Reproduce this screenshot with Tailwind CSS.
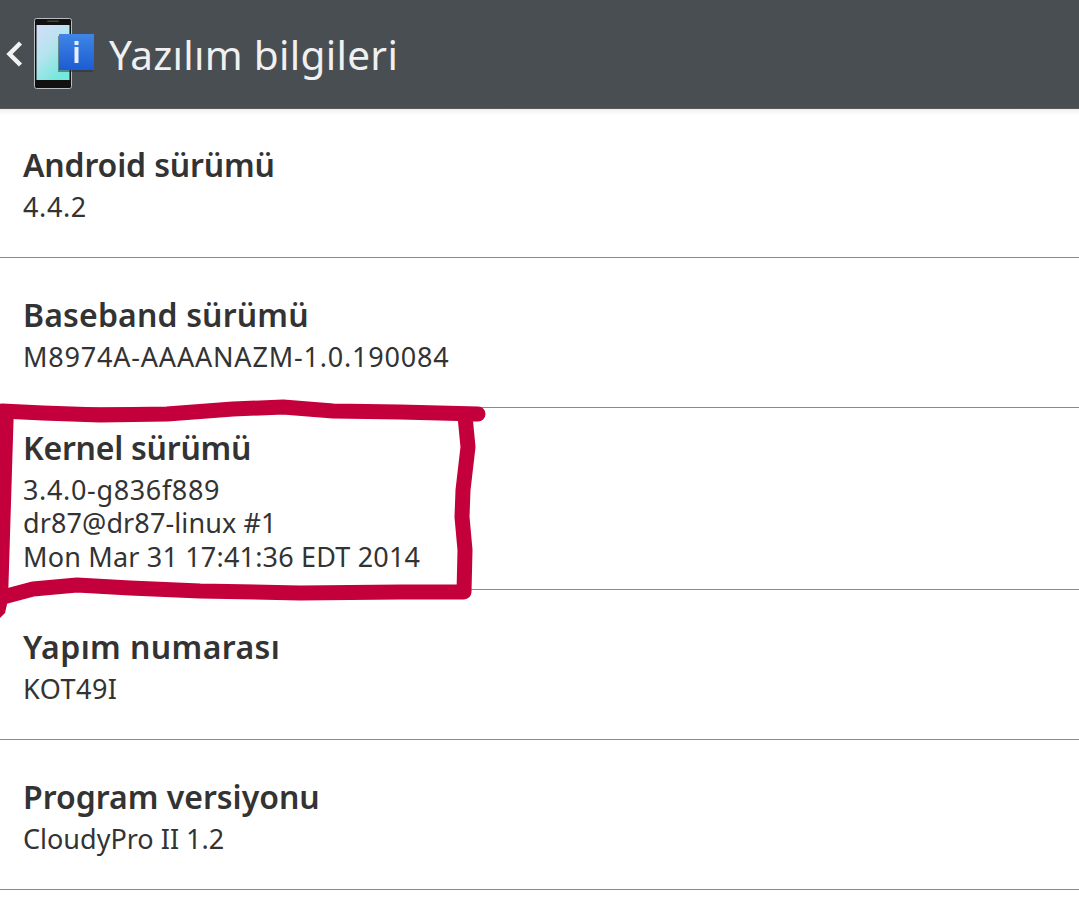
<!DOCTYPE html>
<html lang="tr">
<head>
<meta charset="UTF-8">
<title>Yazılım bilgileri</title>
<script src="https://cdn.jsdelivr.net/npm/@tailwindcss/browser@4"></script>
</head>
<body class="bg-white font-['Noto_Sans',sans-serif] overflow-hidden">
<div class="relative w-[1079px] h-[921px] overflow-hidden">
  <header class="h-[109px] bg-[#484e52] flex items-center border-b border-[#55595c]">
    <svg class="ml-[5px] w-[18px] h-[28px]" viewBox="0 0 18 28"><path d="M15.5 3 L4.5 14 L15.5 25" fill="none" stroke="#f2f2f2" stroke-width="4.5"/></svg>
    <svg class="ml-[11px] w-[62px] h-[72px] shrink-0" viewBox="0 0 62 72">
      <defs>
        <linearGradient id="screen" x1="0" y1="0" x2="0.6" y2="1"><stop offset="0" stop-color="#d5dcf8"/><stop offset="0.5" stop-color="#b5e4ee"/><stop offset="1" stop-color="#74e8dc"/></linearGradient>
        <linearGradient id="badge" x1="0" y1="0" x2="0" y2="1"><stop offset="0" stop-color="#3f86e6"/><stop offset="1" stop-color="#1c5cd2"/></linearGradient>
      </defs>
      <rect x="0.5" y="0.5" width="37" height="70" rx="2" fill="#111" stroke="#b8bcbe"/>
      <rect x="2.5" y="7" width="33" height="55" fill="url(#screen)"/>
      <rect x="13" y="2.5" width="12" height="1.5" rx="0.7" fill="#444"/>
      <rect x="24" y="18" width="35" height="36" fill="#2a2e31" opacity="0.5"/>
      <rect x="25" y="16" width="35" height="36" fill="url(#badge)"/>
      <rect x="40.5" y="23" width="4" height="4" fill="#e8eefc"/>
      <rect x="40.5" y="29" width="4" height="16" fill="#e8eefc"/>
    </svg>
    <h1 class="ml-[13px] pt-[2px] text-[40.5px] leading-none text-[#f0f0f0] tracking-[0.3px]">Yazılım bilgileri</h1>
  </header>
  <div class="h-[6px] bg-gradient-to-b from-[#efefef] to-white"></div>
  <main class="text-[#333333]">
    <section class="h-[143px] pl-[23px] pb-[4px] border-b border-[#8a8a8a] flex flex-col justify-center">
      <h2 class="text-[32px] font-semibold leading-[42px] tracking-[-0.15px]">Android sürümü</h2>
      <p class="text-[27px] leading-[34px] mt-[4px] tracking-[0.6px]">4.4.2</p>
    </section>
    <section class="h-[150px] pl-[23px] pt-[2px] border-b border-[#8a8a8a] flex flex-col justify-center">
      <h2 class="text-[32px] font-semibold leading-[42px] tracking-[0.15px]">Baseband sürümü</h2>
      <p class="text-[27px] leading-[34px] mt-[4px] tracking-[0.8px]">M8974A-AAAANAZM-1.0.190084</p>
    </section>
    <section class="h-[182px] pl-[23px] pt-[3px] border-b border-[#8a8a8a] flex flex-col justify-center">
      <h2 class="text-[32px] font-semibold leading-[42px] tracking-[-0.25px]">Kernel sürümü</h2>
      <p class="text-[27px] leading-[33.5px] mt-[4px]"><span class="tracking-[0.65px]">3.4.0-g836f889</span><br><span class="tracking-[0.1px]">dr87@dr87-linux #1</span><br><span class="tracking-[0.18px]">Mon Mar 31 17:41:36 EDT 2014</span></p>
    </section>
    <section class="h-[150px] pl-[23px] pt-[2px] border-b border-[#8a8a8a] flex flex-col justify-center">
      <h2 class="text-[32px] font-semibold leading-[42px] tracking-[0.4px]">Yapım numarası</h2>
      <p class="text-[27px] leading-[34px] mt-[4px] tracking-[0.5px]">KOT49I</p>
    </section>
    <section class="h-[150px] pl-[23px] pt-[2px] border-b border-[#8a8a8a] flex flex-col justify-center">
      <h2 class="text-[32px] font-semibold leading-[42px]">Program versiyonu</h2>
      <p class="text-[27px] leading-[34px] mt-[4px]">CloudyPro II 1.2</p>
    </section>
  </main>
  <svg class="absolute left-0 top-0 w-[1079px] h-[921px] pointer-events-none" viewBox="0 0 1079 921">
    <path d="M2 411 L43 413 L100 415 L167 414 L233 409 L283 407 L333 411 L400 412 L478 414 M465 416 L468 447 L463 490 L462 517 L465 550 L464 592 L400 592 L300 593 L200 591 L130 588 L77 585 L33 589 L3 597" fill="none" stroke="#c4003c" stroke-width="15" stroke-linecap="round" stroke-linejoin="round"/>
    <path d="M0 405 L14 405 L8 600 L5 613 L0 618 Z" fill="#c4003c"/>
  </svg>
</div>
</body>
</html>
